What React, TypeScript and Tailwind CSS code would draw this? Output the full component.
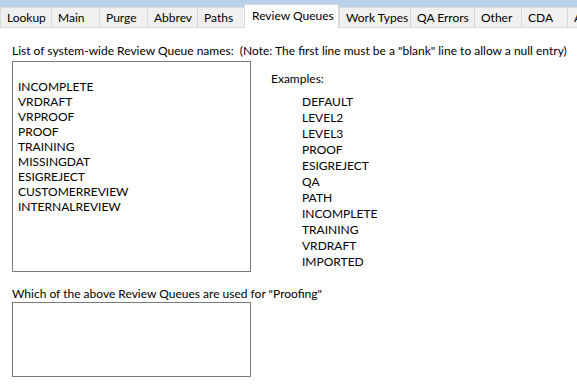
import React from 'react';

const tabs = [
  { label: 'Lookup', w: 'w-[51px]' },
  { label: 'Main', w: 'w-[48px]' },
  { label: 'Purge', w: 'w-[48px]' },
  { label: 'Abbrev', w: 'w-[50px]' },
  { label: 'Paths', w: 'w-[47px]' },
  { label: 'Review Queues', w: 'w-[95px]', active: true },
  { label: 'Work Types', w: 'w-[71px]' },
  { label: 'QA Errors', w: 'w-[64px]' },
  { label: 'Other', w: 'w-[47px]' },
  { label: 'CDA', w: 'w-[46px]' },
  { label: 'A', w: 'w-[20px]' },
];

const queues = [
  '',
  'INCOMPLETE',
  'VRDRAFT',
  'VRPROOF',
  'PROOF',
  'TRAINING',
  'MISSINGDAT',
  'ESIGREJECT',
  'CUSTOMERREVIEW',
  'INTERNALREVIEW',
];

const examples = [
  'DEFAULT',
  'LEVEL2',
  'LEVEL3',
  'PROOF',
  'ESIGREJECT',
  'QA',
  'PATH',
  'INCOMPLETE',
  'TRAINING',
  'VRDRAFT',
  'IMPORTED',
];

function TabStrip() {
  return (
    <div className="flex items-end h-[28px] bg-[#b9d1ea] overflow-hidden">
      {tabs.map((t) =>
        t.active ? (
          <div
            key={t.label}
            className={`${t.w} shrink-0 h-[24px] bg-white border border-b-0 border-[#d9d9d9] pl-[7px] pt-[3px] leading-[15px] whitespace-nowrap`}
          >
            {t.label}
          </div>
        ) : (
          <div
            key={t.label}
            className={`${t.w} shrink-0 h-[21px] bg-[#f0f0f0] border-l border-t border-b border-[#d9d9d9] pl-[6px] pt-[2px] leading-[15px] whitespace-nowrap overflow-hidden`}
          >
            {t.label}
          </div>
        )
      )}
    </div>
  );
}

export default function App() {
  return (
    <div
      className="w-[577px] h-[391px] bg-white text-black text-[12px] overflow-hidden"
      style={{ fontFamily: 'Lato, "Noto Sans", sans-serif' }}
    >
      <TabStrip />
      <div className="px-[12px] pt-[15px]">
        <div className="h-[15px] leading-[15px] whitespace-nowrap">
          List of system-wide Review Queue names:&nbsp; (Note: The first line must be a "blank" line to allow a null entry)
        </div>
        <div className="flex mt-[3px]">
          <div className="w-[239px] h-[211px] shrink-0 border border-[#7a7a7a] pl-[5px] pt-[2px]">
            {queues.map((q, i) => (
              <div key={i} className="h-[15px] leading-[15px]">
                {q}
              </div>
            ))}
          </div>
          <div className="ml-[20px] pt-[10px]">
            <div className="h-[15px] leading-[15px]">Examples:</div>
            <div className="pl-[31px] pt-[8px]">
              {examples.map((e) => (
                <div key={e} className="h-[16px] leading-[16px]">
                  {e}
                </div>
              ))}
            </div>
          </div>
        </div>
        <div className="h-[15px] leading-[15px] mt-[14px] whitespace-nowrap">
          Which of the above Review Queues are used for "Proofing"
        </div>
        <div className="w-[239px] h-[75px] border border-[#7a7a7a] mt-[1px]" />
      </div>
    </div>
  );
}
